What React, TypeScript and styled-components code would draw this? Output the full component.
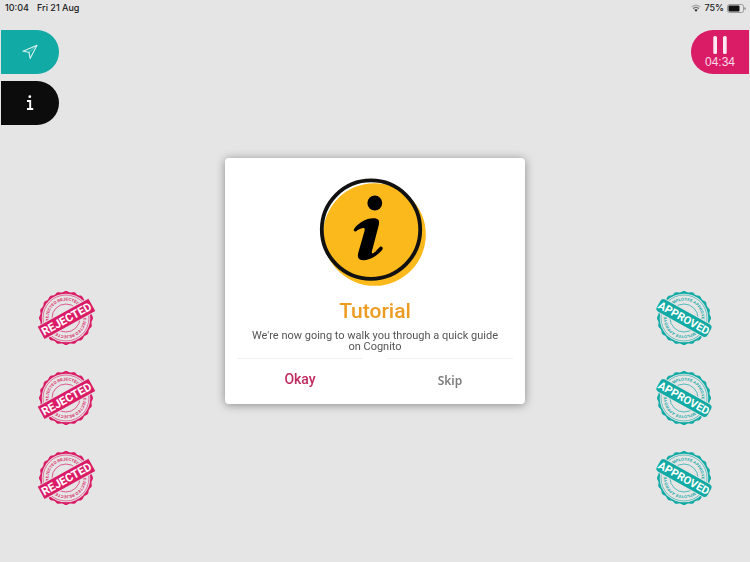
import React, { useId } from "react";
import styled, { createGlobalStyle } from "styled-components";

const colors = {
  page: "#e5e5e5",
  teal: "#12aaa5",
  pink: "#da1c67",
  black: "#0c0c0c",
  amber: "#fbb91c",
};

const GlobalStyle = createGlobalStyle`
  *, *::before, *::after { box-sizing: border-box; }
  body { margin: 0; background: ${colors.page}; }
  button { border: 0; padding: 0; background: none; cursor: pointer; font: inherit; }
`;

const Screen = styled.div`
  min-height: 100vh;
  display: flex;
  flex-direction: column;
  color: #1a1a1a;
  background: ${colors.page};
  font-family: "Liberation Sans", sans-serif;
`;

const StatusBar = styled.header`
  display: flex;
  justify-content: space-between;
  align-items: center;
  height: 16px;
  padding: 0 4px 0 5px;
  font: 500 9px/16px Inter, sans-serif;
`;

const StatusGroup = styled.div<{ $gap: number }>`
  display: flex;
  align-items: center;
  gap: ${(p) => p.$gap}px;
`;

const Controls = styled.nav`
  display: flex;
  justify-content: space-between;
  align-items: flex-start;
  padding: 14px 1px 0;
`;

const ControlStack = styled.div`
  display: flex;
  flex-direction: column;
  gap: 7px;
`;

const Tab = styled.button<{ $color: string; $side: "left" | "right" }>`
  display: flex;
  flex-direction: column;
  align-items: center;
  justify-content: center;
  width: 58px;
  height: 44px;
  color: #fff;
  background: ${(p) => p.$color};
  border-radius: ${(p) => (p.$side === "left" ? "0 22px 22px 0" : "22px 0 0 22px")};
`;

const Timer = styled.span`
  margin-top: 2px;
  font-size: 12px;
  line-height: 12px;
  color: #fbdce8;
`;

const Board = styled.main`
  flex: 1;
  display: flex;
  justify-content: space-between;
  align-items: flex-end;
  padding: 0 34px 52px;
`;

const StampColumn = styled.div`
  display: flex;
  flex-direction: column;
  gap: 16px;
`;

const StampButton = styled.button`
  display: block;
  width: 64px;
  height: 64px;

  svg { display: block; }
`;

const Overlay = styled.div`
  position: fixed;
  inset: 0;
  display: flex;
  align-items: center;
  justify-content: center;
`;

const Dialog = styled.section`
  width: 40%;
  min-width: 300px;
  padding: 20px 12px 0;
  display: flex;
  flex-direction: column;
  align-items: center;
  background: #fff;
  border-radius: 4px;
  box-shadow: 0 1px 10px rgba(0, 0, 0, 0.4);
`;

const Title = styled.h1`
  margin: 11px 0 0;
  color: #ec9c23;
  font: 500 21px/24px Roboto, sans-serif;
`;

const Message = styled.p`
  width: 252px;
  margin: 7px 0 0;
  color: #555;
  font: 400 11px/11px Roboto, sans-serif;
  text-align: center;
`;

const Actions = styled.div`
  align-self: stretch;
  display: grid;
  grid-template-columns: 1fr 1fr;
  column-gap: 24px;
  margin-top: 6px;
`;

const Action = styled.button<{ $primary?: boolean }>`
  height: 46px;
  padding: ${(p) => (p.$primary ? "0 0 6px" : "0 0 2px")};
  border-top: 1px solid #f2f2f2;
  color: ${(p) => (p.$primary ? "#c22a5e" : "#7c7c7c")};
  font: ${(p) => (p.$primary ? "500 14px/16px Roboto" : '600 12px/16px "Noto Sans"')}, sans-serif;
`;

const scallop = (() => {
  const points: string[] = [];
  const steps = 240;
  for (let n = 0; n < steps; n++) {
    const a = (n / steps) * Math.PI * 2;
    const r = 26.4 + 0.6 * Math.cos(a * 20);
    points.push(`${(32 + r * Math.cos(a)).toFixed(2)},${(32 + r * Math.sin(a)).toFixed(2)}`);
  }
  return `M${points.join("L")}Z`;
})();

type StampProps = {
  label: string;
  labelSize: number;
  ring: string;
  color: string;
  angle: number;
  drop: number;
  rounded?: boolean;
};

function Stamp({ label, labelSize, ring, color, angle, drop, rounded }: StampProps) {
  const id = useId();
  return (
    <StampButton type="button" aria-label={label}>
      <svg width="64" height="64" viewBox="0 0 64 64" fill="none">
        <path d={scallop} fill={color} />
        <circle cx="32" cy="32" r="24.3" fill={colors.page} />
        <circle cx="32" cy="32" r="23" stroke={color} strokeWidth="0.6" />
        <circle cx="32" cy="32" r="14" stroke={color} strokeWidth="0.7" />
        <g transform={`rotate(${angle} 32 32)`}>
          <path id={`${id}-top`} d="M14.5 32A17.5 17.5 0 0 1 49.5 32" />
          <path id={`${id}-bottom`} d="M49.5 32A17.5 17.5 0 0 1 14.5 32" />
          <g fill={color} fontFamily="Liberation Sans, sans-serif" fontWeight="700" fontSize="4" textAnchor="middle">
            <text><textPath href={`#${id}-top`} startOffset="50%">{ring}</textPath></text>
            <text><textPath href={`#${id}-bottom`} startOffset="50%">{ring}</textPath></text>
          </g>
          <g transform={`translate(0 ${drop})`}>
            <rect x="2.5" y="24.2" width="59" height="15.6" rx={rounded ? 4 : 0} fill={colors.page} />
            <rect x="3" y="25" width="58" height="14" rx={rounded ? 3.5 : 0} fill={color} />
            <text x="32" y="36" textAnchor="middle" fill="#fff" fontFamily="Roboto, sans-serif" fontWeight="700" fontSize={labelSize}>
              {label}
            </text>
          </g>
        </g>
      </svg>
    </StampButton>
  );
}

function WifiIcon() {
  return (
    <svg width="10" height="8" viewBox="0 0 10 8" fill="none">
      <path d="M.6 3.1Q5-.9 9.4 3.1" stroke="#aaa" strokeWidth="1.2" />
      <path d="M2.1 4.7Q5 2.2 7.9 4.7" stroke="#777" strokeWidth="1.2" />
      <path d="M3.3 5.8Q5 4.5 6.7 5.8L5 7.8Z" fill="#222" />
    </svg>
  );
}

function BatteryIcon() {
  return (
    <svg width="19" height="9" viewBox="0 0 19 9" fill="none">
      <rect x=".5" y=".5" width="16" height="8" rx="2" stroke="#999" />
      <rect x="1.5" y="1.5" width="11" height="6" rx="1" fill="#111" />
      <path d="M17.5 3v3q1.2-.5 1.2-1.5T17.5 3Z" fill="#777" />
    </svg>
  );
}

function LocationIcon() {
  return (
    <svg width="16" height="16" viewBox="0 0 16 16" fill="none">
      <path d="M15 1.3 1 7.3 7 8.2 8.1 14.5Z" stroke="#d7f3f0" strokeWidth="1.1" strokeLinejoin="round" />
      <path d="M15 1.3 7 8.2" stroke="#d7f3f0" strokeWidth=".5" />
    </svg>
  );
}

function InfoIcon() {
  return (
    <svg width="8" height="16" viewBox="0 0 8 16" fill="none">
      <circle cx="3.8" cy="1.7" r="1.4" fill="#fff" />
      <path d="M1 6H4.2V14M1 14H7.2" stroke="#fff" strokeWidth="1.9" />
    </svg>
  );
}

function PauseIcon() {
  return (
    <svg width="16" height="18" viewBox="0 0 16 18" fill="#fde9f1">
      <rect x="1.3" y="0" width="3.7" height="18" rx="1.5" />
      <rect x="11" y="0" width="3.7" height="18" rx="1.5" />
    </svg>
  );
}

function TutorialIcon() {
  return (
    <svg width="112" height="110" viewBox="0 0 112 110" fill="none">
      <circle cx="55.5" cy="56.5" r="51.3" fill={colors.amber} />
      <circle cx="52" cy="51.6" r="49.2" stroke="#111" strokeWidth="3.8" />
      <circle cx="55.8" cy="25" r="7.4" fill="#000" />
      <path
        d="M35 51C40 44 47 40.5 54 40.2C59 40 61 42 59.8 47L53 73C52.4 75.5 53.2 76 54.6 75C57 73.4 58.8 71 61.3 68.5C62.8 68 64.2 69.3 63.6 71.3C59 77.5 51.5 82 44.5 82.2C39.5 82.3 38.2 79.5 39.2 75L45.5 53C46.1 50.6 45.6 49.8 44 50C41.3 50.4 39.2 51.8 36.7 53.5C35.2 53.7 34.2 52.6 35 51Z"
        fill="#000"
      />
    </svg>
  );
}

const rows = [1, 2, 3];

export default function App() {
  return (
    <Screen>
      <GlobalStyle />
      <StatusBar>
        <StatusGroup $gap={8}>
          <time>10:04</time>
          <span>Fri 21 Aug</span>
        </StatusGroup>
        <StatusGroup $gap={3}>
          <WifiIcon />
          <span>75%</span>
          <BatteryIcon />
        </StatusGroup>
      </StatusBar>
      <Controls>
        <ControlStack>
          <Tab type="button" $color={colors.teal} $side="left" aria-label="Location"><LocationIcon /></Tab>
          <Tab type="button" $color={colors.black} $side="left" aria-label="Information"><InfoIcon /></Tab>
        </ControlStack>
        <Tab type="button" $color={colors.pink} $side="right" aria-label="Pause, 04:34">
          <PauseIcon />
          <Timer>04:34</Timer>
        </Tab>
      </Controls>
      <Board>
        <StampColumn>
          {rows.map((row) => (
            <Stamp key={row} label="REJECTED" labelSize={11.5} ring="REJECTED REJECTED" color={colors.pink} angle={-29} drop={1} />
          ))}
        </StampColumn>
        <StampColumn>
          {rows.map((row) => (
            <Stamp key={row} label="APPROVED" labelSize={11} ring="EMPLOYEE APPROVED" color={colors.teal} angle={29} drop={0} rounded />
          ))}
        </StampColumn>
      </Board>
      <Overlay>
        <Dialog role="dialog" aria-modal="true" aria-labelledby="dialog-title">
          <TutorialIcon />
          <Title id="dialog-title">Tutorial</Title>
          <Message>We're now going to walk you through a quick guide on Cognito</Message>
          <Actions>
            <Action type="button" $primary>Okay</Action>
            <Action type="button">Skip</Action>
          </Actions>
        </Dialog>
      </Overlay>
    </Screen>
  );
}
